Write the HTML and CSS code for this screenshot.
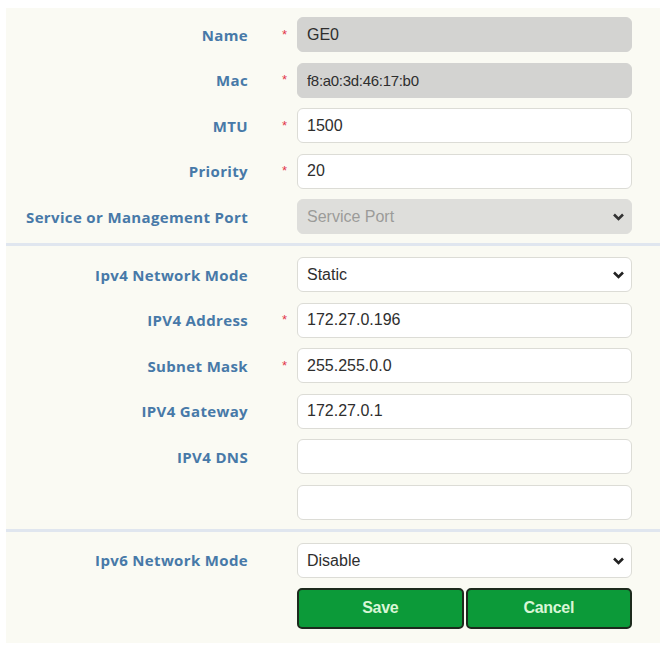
FILE: index.html
```html
<!DOCTYPE html>
<html>
<head>
<meta charset="utf-8">
<link rel="stylesheet" href="styles.css">
</head>
<body>
<form class="panel">
  <div class="section s1">
    <div class="row"><label class="lbl">Name</label><span class="req">*</span><input class="field disabled" value="GE0" disabled></div>
    <div class="row"><label class="lbl">Mac</label><span class="req">*</span><input class="field disabled mac" value="f8:a0:3d:46:17:b0" disabled></div>
    <div class="row"><label class="lbl">MTU</label><span class="req">*</span><input class="field" value="1500"></div>
    <div class="row"><label class="lbl">Priority</label><span class="req">*</span><input class="field" value="20"></div>
    <div class="row"><label class="lbl">Service or Management Port</label><span class="req"></span>
      <div class="selwrap"><select class="field sel disabled" disabled><option>Service Port</option></select><svg class="chev" viewBox="0 0 12 8"><path d="M1.5 1.5 L6 6 L10.5 1.5" fill="none" stroke="#333" stroke-width="2.6"/></svg></div>
    </div>
  </div>
  <div class="section s2">
    <div class="row"><label class="lbl">Ipv4 Network Mode</label><span class="req"></span>
      <div class="selwrap"><select class="field sel"><option>Static</option></select><svg class="chev" viewBox="0 0 12 8"><path d="M1.5 1.5 L6 6 L10.5 1.5" fill="none" stroke="#222" stroke-width="2.6"/></svg></div>
    </div>
    <div class="row"><label class="lbl">IPV4 Address</label><span class="req">*</span><input class="field" value="172.27.0.196"></div>
    <div class="row"><label class="lbl">Subnet Mask</label><span class="req">*</span><input class="field" value="255.255.0.0"></div>
    <div class="row"><label class="lbl">IPV4 Gateway</label><span class="req"></span><input class="field" value="172.27.0.1"></div>
    <div class="row"><label class="lbl">IPV4 DNS</label><span class="req"></span><input class="field" value=""></div>
    <div class="row"><label class="lbl"></label><span class="req"></span><input class="field" value=""></div>
  </div>
  <div class="section s3">
    <div class="row"><label class="lbl">Ipv6 Network Mode</label><span class="req"></span>
      <div class="selwrap"><select class="field sel"><option>Disable</option></select><svg class="chev" viewBox="0 0 12 8"><path d="M1.5 1.5 L6 6 L10.5 1.5" fill="none" stroke="#222" stroke-width="2.6"/></svg></div>
    </div>
    <div class="row btnrow"><span></span><span></span>
      <div class="btns"><button type="button" class="btn">Save</button><button type="button" class="btn">Cancel</button></div>
    </div>
  </div>
</form>
</body>
</html>
```

FILE: styles.css
```css
html, body {
  margin: 0;
  padding: 0;
  background: #ffffff;
}
body {
  width: 660px;
  height: 651px;
  overflow: hidden;
}
.panel {
  margin: 8px 0 0 6px;
  height: 635px;
  background: #fafaf3;
  box-sizing: border-box;
  padding-top: 9px;
}
.section {
  display: flex;
  flex-direction: column;
  gap: 10.5px;
}
.s1 {
  padding-bottom: 9px;
  border-bottom: 3px solid #e0e6ef;
}
.s2 {
  padding-top: 11px;
  gap: 10.6px;
  padding-bottom: 9px;
  border-bottom: 3px solid #e0e6ef;
}
.s3 {
  padding-top: 11px;
  gap: 10px;
}
.row {
  display: grid;
  grid-template-columns: 242px 49px 335px;
  align-items: center;
  height: 35px;
}
.btnrow {
  height: 41px;
}
.lbl {
  font-family: "Open Sans", "Liberation Sans", sans-serif;
  font-weight: 700;
  font-size: 15px;
  letter-spacing: 0.35px;
  color: #4779a8;
  text-align: right;
  white-space: nowrap;
}
.req {
  font-family: "Liberation Sans", Arial, sans-serif;
  color: #e2354b;
  font-size: 13px;
  text-align: right;
  padding-right: 10px;
  align-self: center;
  margin-top: -1px;
}
.field {
  box-sizing: border-box;
  width: 335px;
  height: 35px;
  margin: 0;
  padding: 0 9px;
  border: 1px solid #dcdcd6;
  border-radius: 6px;
  background: #ffffff;
  font-family: "Liberation Sans", Arial, sans-serif;
  font-size: 16px;
  color: #2e2e2e;
  outline: none;
}
.field.disabled {
  background: #d3d3d1;
  border-color: #d3d3d1;
  color: #2e2e2e;
}
.field.mac {
  font-size: 15px;
  letter-spacing: -0.3px;
}
.selwrap {
  position: relative;
  width: 335px;
  height: 35px;
}
.sel {
  appearance: none;
  -webkit-appearance: none;
  display: block;
}
.sel.disabled {
  color: #747474;
}
.chev {
  position: absolute;
  right: 7px;
  top: 14px;
  width: 13px;
  height: 8px;
  pointer-events: none;
}
.btns {
  display: flex;
  gap: 2px;
  width: 335px;
  height: 41px;
}
.btn {
  flex: 1;
  box-sizing: border-box;
  height: 41px;
  margin: 0;
  background: #0c9a39;
  border: 2px solid #1d2a1d;
  border-radius: 5px;
  font-family: "Liberation Sans", Arial, sans-serif;
  font-weight: 700;
  font-size: 16px;
  color: #d8f6d6;
  letter-spacing: -0.3px;
}
```
